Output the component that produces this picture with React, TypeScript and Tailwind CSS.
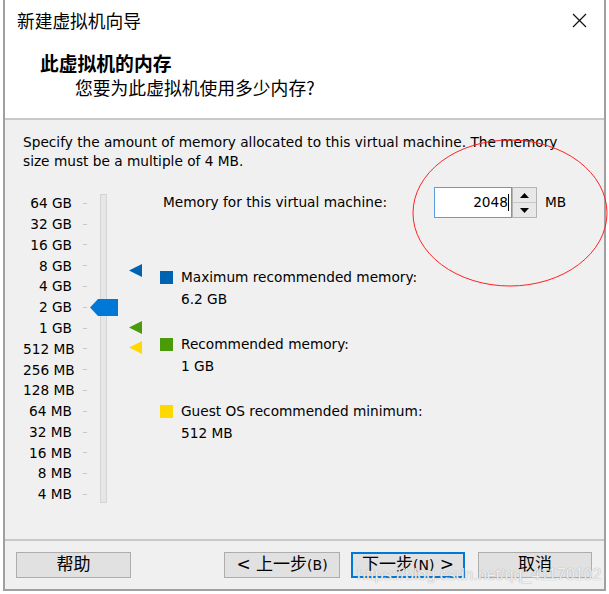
import React from "react";

const labels = ["64 GB","32 GB","16 GB","8 GB","4 GB","2 GB","1 GB","512 MB","256 MB","128 MB","64 MB","32 MB","16 MB","8 MB","4 MB"];

function Tri({ color, top }: { color: string; top: number }) {
  return (
    <svg className="absolute left-0" style={{ top }} width="13" height="13" viewBox="0 0 13 13">
      <polygon points="0,6.5 13,0 13,13" fill={color} />
    </svg>
  );
}

function LegendItem({ color, title, value, first }: { color: string; title: string; value: string; first?: boolean }) {
  return (
    <div className={`flex gap-[8px] ${first ? "mt-[48px]" : "mt-[23px]"}`}>
      <div className={`w-[13px] h-[13px] mt-[4.5px] ${color}`} />
      <div className="leading-[22px]">
        <div>{title}</div>
        <div>{value}</div>
      </div>
    </div>
  );
}

export default function App() {
  return (
    <div className="relative w-[609px] h-[594px] bg-white overflow-hidden text-black font-['DejaVu_Sans','Noto_Sans_CJK_SC',sans-serif]">
      <div className="ml-[3px] w-[603px] h-[591px] flex flex-col border-x-2 border-b-2 border-[#a0a0a0]">
        {/* header */}
        <div className="h-[120px] shrink-0 bg-white border-b-2 border-[#c8c8c8] flex flex-col">
          <div className="h-[40px] flex items-center justify-between pl-[12px] pr-[17px]">
            <span className="text-[17.7px] font-['Noto_Sans_CJK_SC',sans-serif]">新建虚拟机向导</span>
            <svg width="15" height="15" viewBox="0 0 15 15">
              <path d="M1 1 L14 14 M14 1 L1 14" stroke="#111" strokeWidth="1.2" fill="none" />
            </svg>
          </div>
          <div className="mt-[10px] leading-[25px] font-['Noto_Sans_CJK_SC',sans-serif]">
            <div className="pl-[35px] text-[18.8px] font-bold">此虚拟机的内存</div>
            <div className="pl-[70px] text-[17.8px]">您要为此虚拟机使用多少内存?</div>
          </div>
        </div>

        {/* body */}
        <div className="flex-1 bg-[#f0f0f0] px-[18px] pt-[13px] text-[13.7px]">
          <p className="leading-[19px] whitespace-nowrap">
            Specify the amount of memory allocated to this virtual machine. The memory
            <br />
            size must be a multiple of 4 MB.
          </p>
          <div className="mt-[13px] flex items-start">
            {/* scale labels */}
            <div className="pt-[9px]">
              {labels.map((l) => (
                <div key={l} className="h-[20.8px] flex items-center">
                  <span className="w-[49px] text-right whitespace-nowrap">{l}</span>
                  <span className="ml-[11px] w-[4px] h-px bg-[#c8c8c8]" />
                </div>
              ))}
            </div>
            {/* track */}
            <div className="relative ml-[13px] mt-[10px] w-[7px] h-[309px] bg-[#e6e6e6] border border-[#d4d4d4]">
              <svg className="absolute left-[-11px] top-[104px]" width="28" height="17" viewBox="0 0 28 17">
                <polygon points="0,8.5 8,0 28,0 28,17 8,17" fill="#0078d7" />
              </svg>
            </div>
            {/* markers */}
            <div className="relative ml-[22px] w-[13px] h-[200px]">
              <Tri color="#0063b1" top={80} />
              <Tri color="#4a9a0a" top={137} />
              <Tri color="#ffd800" top={157} />
            </div>
            {/* right content */}
            <div className="ml-[18px] flex flex-col">
              <div className="mt-[3px] flex items-center">
                <span className="pl-[3px] w-[274px] whitespace-nowrap">Memory for this virtual machine:</span>
                <div className="w-[78px] h-[31px] bg-white border border-[#5a9ee0] pr-[2px] flex justify-end items-center">
                  <span>2048</span>
                  <span className="w-px h-[17px] bg-black" />
                </div>
                <div className="w-[25px] h-[31px] flex flex-col border border-[#b4b4b4] bg-[#e8e8e8]">
                  <div className="flex-1 flex items-center justify-center border-b border-[#c8c8c8]">
                    <svg width="9" height="5" viewBox="0 0 9 5"><polygon points="0,5 4.5,0 9,5" fill="#000" /></svg>
                  </div>
                  <div className="flex-1 flex items-center justify-center">
                    <svg width="9" height="5" viewBox="0 0 9 5"><polygon points="0,0 9,0 4.5,5" fill="#000" /></svg>
                  </div>
                </div>
                <span className="ml-[8px]">MB</span>
              </div>
              <LegendItem first color="bg-[#0063b1]" title="Maximum recommended memory:" value="6.2 GB" />
              <LegendItem color="bg-[#4a9a0a]" title="Recommended memory:" value="1 GB" />
              <LegendItem color="bg-[#ffd800]" title="Guest OS recommended minimum:" value="512 MB" />
            </div>
          </div>
        </div>

        {/* footer */}
        <div className="h-[50px] shrink-0 bg-[#f0f0f0] border-t-2 border-[#c8c8c8] pt-[11px] pl-[11px] pr-[12px] flex items-start text-[17px] font-['DejaVu_Sans','Noto_Sans_CJK_SC',sans-serif]">
          <button className="w-[115px] h-[26px] bg-[#e1e1e1] border border-[#adadad] flex items-center justify-center">帮助</button>
          <button className="ml-auto w-[116px] h-[26px] bg-[#e1e1e1] border border-[#adadad] flex items-center justify-center">&lt; 上一步<span className="text-[14px]">(B)</span></button>
          <button className="ml-[11px] w-[114px] h-[26px] bg-[#e1e1e1] border-2 border-[#0078d7] flex items-center justify-center">下一步<span className="text-[14px]">(N)</span>&nbsp;&gt;</button>
          <button className="ml-[13px] w-[114px] h-[26px] bg-[#e1e1e1] border border-[#adadad] flex items-center justify-center">取消</button>
        </div>
      </div>

      {/* red annotation ellipse */}
      <svg className="absolute left-0 top-0 pointer-events-none" width="609" height="594" viewBox="0 0 609 594">
        <ellipse cx="510" cy="213" rx="97" ry="73" fill="none" stroke="#ff2020" strokeWidth="1" />
      </svg>

      {/* watermark */}
      <div className="absolute left-[357px] top-[564px] text-[16px] leading-[22px] text-white/85 font-['Liberation_Sans',sans-serif] [text-shadow:0_0_1px_#888]">
        https://blog.csdn.net/qq_41170102
      </div>
    </div>
  );
}
